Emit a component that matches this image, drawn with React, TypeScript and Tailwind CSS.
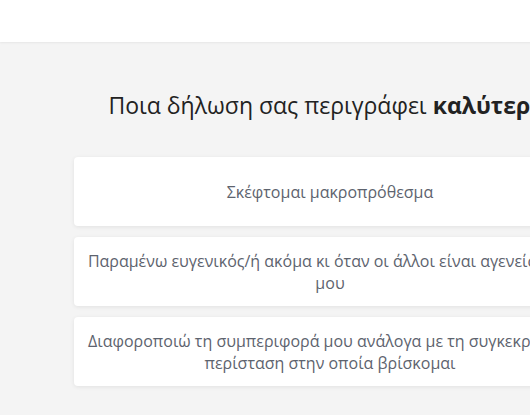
const options = [
  "Σκέφτομαι μακροπρόθεσμα",
  "Παραμένω ευγενικός/ή ακόμα κι όταν οι άλλοι είναι αγενείς μαζί μου",
  "Διαφοροποιώ τη συμπεριφορά μου ανάλογα με τη συγκεκριμένη περίσταση στην οποία βρίσκομαι",
];

export default function App() {
  return (
    <div className="w-[660px] min-h-[415px] bg-[#f4f4f4] font-['Open_Sans',sans-serif]">
      {/* Top bar */}
      <div className="h-[42px] bg-white shadow-[0_1px_2px_rgba(0,0,0,0.06)]" />

      <div className="flex flex-col items-center pt-[50px]">
        <h1 className="text-[23px] leading-[27px] text-[#222]">
          Ποια δήλωση σας περιγράφει <span className="font-bold">καλύτερα;</span>
        </h1>

        <div className="mt-[38px] w-[512px] flex flex-col gap-[11px]">
          {options.map((opt) => (
            <button
              key={opt}
              className="h-[69px] w-full rounded bg-white px-3 flex items-center justify-center text-center text-[16px] leading-[22px] text-[#5d636e] shadow-[0_1px_4px_rgba(0,0,0,0.08)]"
            >
              {opt}
            </button>
          ))}
        </div>
      </div>
    </div>
  );
}
